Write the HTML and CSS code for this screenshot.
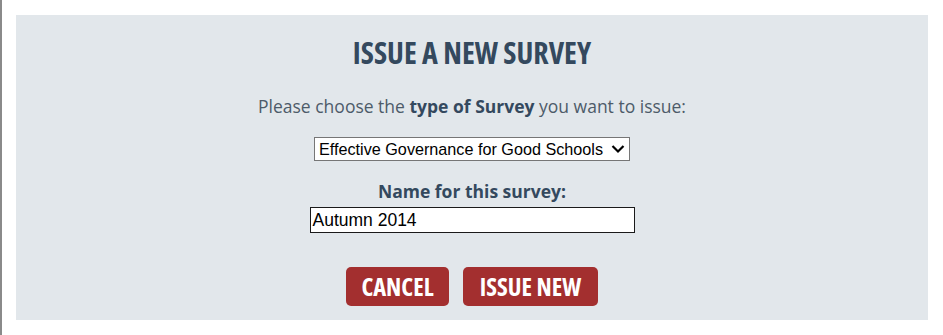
FILE: index.html
```html
<!DOCTYPE html>
<html>
<head>
<meta charset="utf-8">
<link rel="stylesheet" href="styles.css">
</head>
<body>
<div class="page">
  <div class="edge"></div>
  <div class="panel">
    <h1 class="title">ISSUE A NEW SURVEY</h1>
    <p class="intro">Please choose the <b>type of Survey</b> you want to issue:</p>
    <div class="select-row">
      <div class="select">
        <span class="select-text">Effective Governance for Good Schools</span>
        <svg class="chev" width="14" height="10" viewBox="0 0 14 10"><path d="M1.5 2 L7 7.5 L12.5 2" fill="none" stroke="#000" stroke-width="2.2"/></svg>
      </div>
    </div>
    <div class="label">Name for this survey:</div>
    <div class="input-row">
      <div class="input">Autumn 2014</div>
    </div>
    <div class="buttons">
      <div class="btn btn-cancel">CANCEL</div>
      <div class="btn btn-issue">ISSUE NEW</div>
    </div>
  </div>
</div>
</body>
</html>
```
FILE: styles.css
```css
html, body {
  margin: 0;
  padding: 0;
  background: #ffffff;
  width: 943px;
  height: 335px;
  overflow: hidden;
}
.page {
  display: flex;
  height: 335px;
}
.edge {
  width: 2px;
  height: 335px;
  background: #8a8a8a;
  flex: none;
}
.panel {
  margin: 15px 0 0 14px;
  width: 912px;
  height: 305px;
  background: #e2e7eb;
  display: flex;
  flex-direction: column;
  align-items: center;
  font-family: "Open Sans", sans-serif;
  color: #4d5b69;
}
.title {
  margin: 20px 0 0 0;
  font-size: 30px;
  line-height: 36px;
  font-weight: 700;
  font-stretch: 75%;
  color: #34495e;
  letter-spacing: 0;
}
.intro {
  margin: 24px 0 0 0;
  font-size: 17.5px;
  line-height: 22px;
}
.intro b {
  color: #34495e;
  font-weight: 700;
}
.select-row {
  margin-top: 20px;
}
.select {
  box-sizing: border-box;
  width: 316px;
  height: 24px;
  border: 1px solid #767676;
  background: #fff;
  display: flex;
  align-items: center;
  padding: 0 4px 0 4px;
  font-family: "Liberation Sans", Arial, sans-serif;
  font-size: 16.2px;
  color: #000;
}
.select-text {
  flex: 1;
  white-space: nowrap;
}
.chev {
  flex: none;
}
.label {
  margin-top: 19px;
  font-size: 17.5px;
  line-height: 22px;
  font-weight: 700;
  color: #34495e;
}
.input-row {
  margin-top: 5px;
}
.input {
  box-sizing: border-box;
  width: 325px;
  height: 26px;
  border: 1px solid #1a1a1a;
  background: #fff;
  padding: 0 2px;
  font-family: "Liberation Sans", Arial, sans-serif;
  font-size: 17.5px;
  line-height: 24px;
  color: #000;
}
.buttons {
  margin-top: 34px;
  display: flex;
  gap: 14px;
}
.btn {
  height: 39px;
  border-radius: 5px;
  background: #a32f2f;
  color: #fff;
  font-weight: 700;
  font-stretch: 75%;
  font-size: 24.5px;
  line-height: 39px;
  text-align: center;
  box-sizing: border-box;
}
.btn-cancel {
  width: 103px;
}
.btn-issue {
  width: 135px;
}
```
